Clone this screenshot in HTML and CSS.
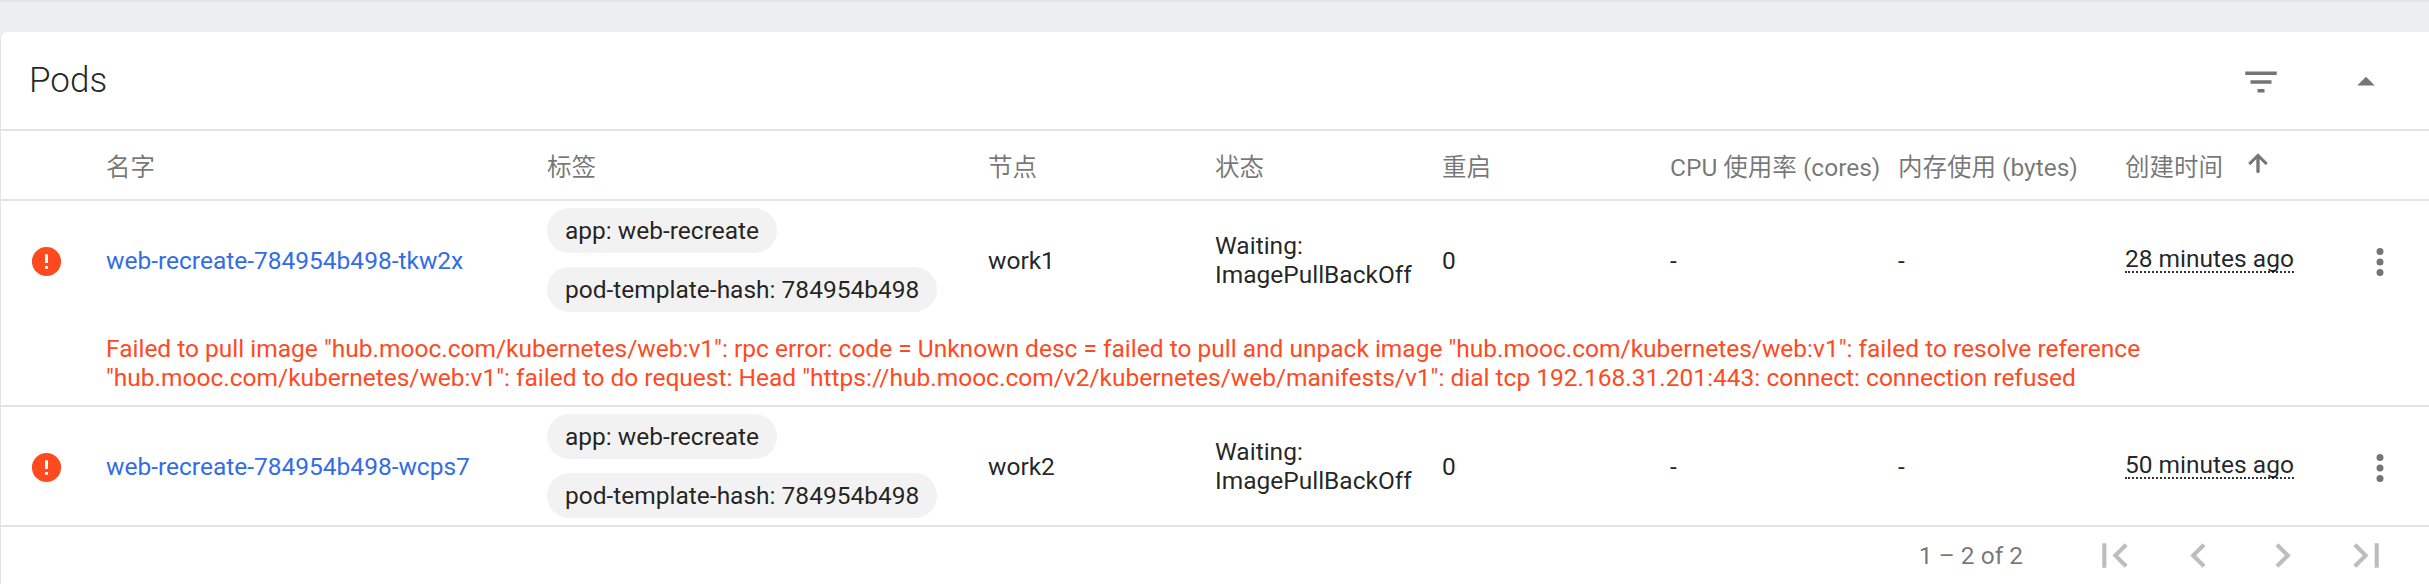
FILE: index.html
```html
<!DOCTYPE html>
<html lang="en">
<head>
<meta charset="UTF-8">
<meta name="viewport" content="width=device-width, initial-scale=1.0">
<title>Pods</title>
<link rel="stylesheet" href="styles.css">
</head>
<body>
<div class="card">
    <div class="card-header">
        <span class="card-title">Pods</span>
        <button class="icon-btn filter-btn" type="button">
            <svg width="42" height="42" viewBox="0 0 24 24"><path d="M10 18h4v-2h-4v2zM3 6v2h18V6H3zm3 7h12v-2H6v2z"/></svg>
        </button>
        <button class="icon-btn collapse-btn" type="button">
            <svg width="42" height="42" viewBox="0 0 24 24"><path d="M7 14l5-5 5 5z"/></svg>
        </button>
    </div>

    <div class="grid-row head-row">
        <span></span>
        <span>名字</span>
        <span>标签</span>
        <span>节点</span>
        <span>状态</span>
        <span>重启</span>
        <span>CPU 使用率 (cores)</span>
        <span>内存使用 (bytes)</span>
        <span class="sort-cell">创建时间
            <svg class="sort-icon" width="28" height="28" viewBox="0 0 24 24"><path d="M4 12l1.41 1.41L11 7.83V20h2V7.83l5.58 5.59L20 12l-8-8-8 8z"/></svg>
        </span>
    </div>

    <div class="pod">
        <div class="grid-row body-row">
            <span class="status-icon"><svg width="35" height="35" viewBox="0 0 24 24"><path d="M12 2a10 10 0 1 0 0 20 10 10 0 0 0 0-20zm1 15h-2v-2h2v2zm0-4h-2V7h2v6z"/></svg></span>
            <a class="pod-link" href="#">web-recreate-784954b498-tkw2x</a>
            <div class="chips">
                <span class="chip">app: web-recreate</span>
                <span class="chip">pod-template-hash: 784954b498</span>
            </div>
            <span>work1</span>
            <span>Waiting:<br>ImagePullBackOff</span>
            <span>0</span>
            <span>-</span>
            <span>-</span>
            <span class="age">28 minutes ago</span>
            <span class="menu-cell"><svg width="42" height="42" viewBox="0 0 24 24"><path d="M12 8a2 2 0 1 0 0-4 2 2 0 0 0 0 4zm0 2a2 2 0 1 0 0 4 2 2 0 0 0 0-4zm0 6a2 2 0 1 0 0 4 2 2 0 0 0 0-4z"/></svg></span>
        </div>
        <div class="pod-error">Failed to pull image "hub.mooc.com/kubernetes/web:v1": rpc error: code = Unknown desc = failed to pull and unpack image "hub.mooc.com/kubernetes/web:v1": failed to resolve reference<br>"hub.mooc.com/kubernetes/web:v1": failed to do request: Head "https://hub.mooc.com/v2/kubernetes/web/manifests/v1": dial tcp 192.168.31.201:443: connect: connection refused</div>
    </div>

    <div class="pod">
        <div class="grid-row body-row">
            <span class="status-icon"><svg width="35" height="35" viewBox="0 0 24 24"><path d="M12 2a10 10 0 1 0 0 20 10 10 0 0 0 0-20zm1 15h-2v-2h2v2zm0-4h-2V7h2v6z"/></svg></span>
            <a class="pod-link" href="#">web-recreate-784954b498-wcps7</a>
            <div class="chips">
                <span class="chip">app: web-recreate</span>
                <span class="chip">pod-template-hash: 784954b498</span>
            </div>
            <span>work2</span>
            <span>Waiting:<br>ImagePullBackOff</span>
            <span>0</span>
            <span>-</span>
            <span>-</span>
            <span class="age">50 minutes ago</span>
            <span class="menu-cell"><svg width="42" height="42" viewBox="0 0 24 24"><path d="M12 8a2 2 0 1 0 0-4 2 2 0 0 0 0 4zm0 2a2 2 0 1 0 0 4 2 2 0 0 0 0-4zm0 6a2 2 0 1 0 0 4 2 2 0 0 0 0-4z"/></svg></span>
        </div>
    </div>

    <div class="paginator">
        <span class="page-range">1 – 2 of 2</span>
        <span class="page-btn"><svg width="49" height="49" viewBox="0 0 24 24"><path d="M18.41 16.59L13.82 12l4.59-4.59L17 6l-6 6 6 6zM6 6h2v12H6z"/></svg></span>
        <span class="page-btn"><svg width="49" height="49" viewBox="0 0 24 24"><path d="M15.41 7.41L14 6l-6 6 6 6 1.41-1.41L10.83 12z"/></svg></span>
        <span class="page-btn"><svg width="49" height="49" viewBox="0 0 24 24"><path d="M10 6L8.59 7.41 13.17 12l-4.58 4.59L10 18l6-6z"/></svg></span>
        <span class="page-btn"><svg width="49" height="49" viewBox="0 0 24 24"><path d="M5.59 7.41L10.18 12l-4.59 4.59L7 18l6-6-6-6zM16 6h2v12h-2z"/></svg></span>
    </div>
</div>
</body>
</html>
```

FILE: styles.css
```css
* {
    box-sizing: border-box;
}
html, body {
    height: 100%;
}
body {
    margin: 0;
    padding-top: 32px;
    overflow: hidden;
    background-color: #edeef0;
    box-shadow: inset 0 2px 2px -1px #dcdde0;
    font-family: Roboto, "Noto Sans CJK SC", sans-serif;
    font-size: 24.5px;
    color: rgba(0, 0, 0, 0.87);
}
.card {
    height: 552px;
    background-color: #fff;
    border-radius: 6px 0 0 0;
    box-shadow: inset 1px 0 0 #e3e3e3;
}
.card-header {
    display: flex;
    align-items: center;
    height: 99px;
    padding: 3px 0 0 29px;
    border-bottom: 2px solid #e3e3e3;
}
.card-title {
    flex: 1;
    margin-top: -3px;
    font-size: 35px;
    font-weight: 300;
}
.icon-btn {
    display: flex;
    padding: 0;
    border: none;
    background: none;
}
.icon-btn svg {
    fill: #757575;
}
.filter-btn {
    margin-right: 63px;
}
.collapse-btn {
    margin-right: 42px;
}
.grid-row {
    display: grid;
    grid-template-columns: 106px 441px 441px 227px 227px 228px 228px 227px 234px 70px;
    align-items: center;
}
.head-row {
    height: 70px;
    border-bottom: 2px solid #e3e3e3;
    color: rgba(0, 0, 0, 0.54);
}
.sort-cell {
    display: flex;
    align-items: center;
    gap: 21px;
}
.sort-icon {
    margin-top: -4px;
    fill: #757575;
    stroke: #757575;
    stroke-width: 0.8;
}
.body-row {
    height: 118px;
}
.status-icon {
    display: flex;
    padding: 3px 0 0 29px;
}
.status-icon svg {
    fill: #ff4a1f;
}
.pod-link {
    color: #326de6;
    text-decoration: none;
}
.chips {
    display: flex;
    flex-direction: column;
    align-items: flex-start;
    gap: 14px;
}
.chip {
    height: 45px;
    padding: 0 18px;
    border-radius: 23px;
    background-color: #f2f2f2;
    line-height: 45px;
}
.age {
    justify-self: start;
    border-bottom: 2px dotted #333;
    line-height: 24px;
}
.menu-cell {
    display: flex;
    padding-top: 4px;
}
.menu-cell svg {
    fill: #757575;
}
.pod {
    border-bottom: 2px solid #e3e3e3;
}
.pod-error {
    padding: 15px 0 13px 106px;
    color: #ff4a1f;
    line-height: 29px;
}
.paginator {
    display: flex;
    align-items: center;
    justify-content: flex-end;
    height: 57px;
    padding-right: 21px;
}
.page-range {
    margin-right: 49px;
    color: rgba(0, 0, 0, 0.54);
}
.page-btn {
    display: flex;
    justify-content: center;
    width: 84px;
}
.page-btn svg {
    fill: #bdbdbd;
}
```
